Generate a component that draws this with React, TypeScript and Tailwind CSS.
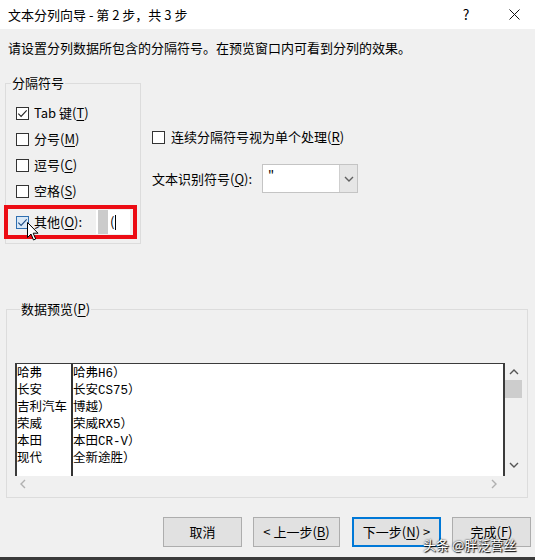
import React from "react";

function Box({ checked, hover }: { checked?: boolean; hover?: boolean }) {
  return (
    <span
      className={
        hover
          ? "w-[13px] h-[13px] border border-[#2f6fb0] bg-[#d9e8f6] flex items-center justify-center shrink-0"
          : "w-[13px] h-[13px] border border-[#333333] bg-white flex items-center justify-center shrink-0"
      }
    >
      {checked && (
        <svg width="11" height="11" viewBox="0 0 11 11">
          <path
            d="M1.3 5.6 L4.1 8.4 L9.7 2.4"
            fill="none"
            stroke={hover ? "#1e4e86" : "#222"}
            strokeWidth="1.1"
          />
        </svg>
      )}
    </span>
  );
}

function Row({ checked, label, k, rest }: { checked?: boolean; label: string; k: string; rest?: string }) {
  return (
    <div className="h-[26px] flex items-center pl-[10px] gap-[5px]">
      <Box checked={checked} />
      <span className="leading-[18px]">
        {label}(<u className="underline-offset-2">{k}</u>){rest}
      </span>
    </div>
  );
}

function Chev({ dir, color }: { dir: "up" | "down" | "left" | "right"; color: string }) {
  const d =
    dir === "up"
      ? "M1 6 L5 2 L9 6"
      : dir === "down"
      ? "M1 2 L5 6 L9 2"
      : dir === "left"
      ? "M6 1 L2 5 L6 9"
      : "M2 1 L6 5 L2 9";
  const w = dir === "up" || dir === "down" ? 10 : 8;
  const h = dir === "up" || dir === "down" ? 8 : 10;
  return (
    <svg width={w} height={h} viewBox={`0 0 ${w} ${h}`}>
      <path d={d} fill="none" stroke={color} strokeWidth="1.4" />
    </svg>
  );
}

const rows: [string, string][] = [
  ["哈弗", "哈弗H6）"],
  ["长安", "长安CS75）"],
  ["吉利汽车", "博越）"],
  ["荣威", "荣威RX5）"],
  ["本田", "本田CR-V）"],
  ["现代", "全新途胜）"],
];

export default function App() {
  return (
    <div className="relative w-[535px] h-[560px] overflow-hidden bg-[#f0f0f0] text-[13px] text-black font-['Noto_Sans_CJK_SC','Microsoft_YaHei',sans-serif] flex flex-col">
      {/* title bar */}
      <div className="h-[29px] bg-white flex items-center pl-[8px] shrink-0">
        <span className="flex-1 leading-[18px]">文本分列向导 - 第 2 步，共 3 步</span>
        <span className="w-[20px] text-center text-[14px]">?</span>
        <span className="w-[20px] ml-[28px] mr-[11px] flex items-center justify-center">
          <svg width="11" height="11" viewBox="0 0 11 11">
            <path d="M0.5 0.5 L10.5 10.5 M10.5 0.5 L0.5 10.5" stroke="#111" strokeWidth="1" />
          </svg>
        </span>
      </div>

      {/* instruction */}
      <div className="pl-[8px] pt-[10px] leading-[18px]">
        请设置分列数据所包含的分隔符号。在预览窗口内可看到分列的效果。
      </div>

      {/* middle */}
      <div className="mt-[17px] flex">
        <fieldset className="ml-[5px] w-[136px] border border-[#dcdcdc] p-0 pb-[4px]">
          <legend className="ml-[5px] px-[1px] leading-[18px]">分隔符号</legend>
          <div className="pt-[8px]">
            <Row checked label="Tab 键" k="T" />
            <Row label="分号" k="M" />
            <Row label="逗号" k="C" />
            <Row label="空格" k="S" />
            <div className="mt-[1px] -ml-[2px] w-[133px] h-[34px] border-[4px] border-[#ec0c14] flex items-center pl-[8px]">
              <Box checked hover />
              <span className="ml-[5px] leading-[18px]">
                其他(<u className="underline-offset-2">O</u>):
              </span>
              <div className="ml-auto mr-[3px] w-[34px] h-[24px] bg-white flex items-center pl-[2px]">
                <div className="w-[10px] h-[24px] bg-[#cbcbcb]" />
                <span className="ml-[2px] leading-[16px]">(</span>
                <div className="ml-[1px] w-[1px] h-[15px] bg-black" />
              </div>
            </div>
          </div>
        </fieldset>

        <div className="ml-[11px] pt-[54px]">
          <div className="h-[18px] flex items-center gap-[6px]">
            <Box />
            <span className="leading-[18px]">
              连续分隔符号视为单个处理(<u className="underline-offset-2">R</u>)
            </span>
          </div>
          <div className="mt-[18px] flex items-center">
            <span className="w-[110px] leading-[18px]">
              文本识别符号(<u className="underline-offset-2">Q</u>):
            </span>
            <div className="w-[96px] h-[29px] bg-white border border-[#c4c4c4] flex">
              <div className="flex-1 pl-[5px] pt-[1px] leading-[18px]">"</div>
              <div className="w-[18px] h-full bg-[#e6e6e6] border-l border-[#cfcfcf] flex items-center justify-center">
                <Chev dir="down" color="#606060" />
              </div>
            </div>
          </div>
        </div>
      </div>

      {/* data preview */}
      <fieldset className="mt-[56px] ml-[6px] w-[522px] border border-[#dcdcdc] p-0 pl-[8px] pb-[5px]">
        <legend className="ml-[5px] px-[1px] leading-[18px]">
          数据预览(<u className="underline-offset-2">P</u>)
        </legend>
        <div className="pt-[45px] flex">
          <div className="w-[490px] flex flex-col">
            <div className="h-[113px] bg-white border-t-[1.5px] border-l-2 border-r-2 border-[#3b3b3b] flex font-['Liberation_Mono','Noto_Sans_CJK_SC',monospace] text-[12.5px] leading-[17px] overflow-hidden">
              <div className="w-[56px] border-r-2 border-[#333333] pt-[2px]">
                {rows.map((r) => (
                  <div key={r[0]} className="h-[17px] whitespace-nowrap">
                    {r[0]}
                  </div>
                ))}
              </div>
              <div className="flex-1 pt-[2px]">
                {rows.map((r) => (
                  <div key={r[1]} className="h-[17px] whitespace-nowrap">
                    {r[1]}
                  </div>
                ))}
              </div>
            </div>
            <div className="h-[16px] flex items-center justify-between pl-[4px] pr-[7px]">
              <Chev dir="left" color="#b0b0b0" />
              <Chev dir="right" color="#b0b0b0" />
            </div>
          </div>
          <div className="w-[17px] h-[113px] flex flex-col">
            <div className="h-[17px] flex items-center justify-center">
              <Chev dir="up" color="#555" />
            </div>
            <div className="h-[18px] bg-[#cdcdcd]" />
            <div className="flex-1" />
            <div className="h-[17px] mb-[3px] flex items-center justify-center">
              <Chev dir="down" color="#555" />
            </div>
          </div>
        </div>
      </fieldset>

      {/* buttons */}
      <div className="mt-[19px] flex justify-end pr-[4px]">
        <button className="w-[79px] h-[30px] bg-[#e1e1e1] border border-[#adadad] leading-[18px]">取消</button>
        <button className="ml-[11px] w-[87px] h-[30px] bg-[#e1e1e1] border border-[#adadad] leading-[18px]">
          &lt; 上一步(<u className="underline-offset-2">B</u>)
        </button>
        <button className="ml-[12px] w-[89px] h-[30px] bg-[#e1e1e1] border-2 border-[#0078d7] leading-[18px]">
          下一步(<u className="underline-offset-2">N</u>) &gt;
        </button>
        <button className="ml-[11px] w-[79px] h-[30px] bg-[#e1e1e1] border border-[#adadad] leading-[18px]">
          完成(<u className="underline-offset-2">F</u>)
        </button>
      </div>

      <div className="flex-1" />
      <div className="h-[3px] bg-[#3a3a3a] shrink-0" />

      {/* mouse cursor */}
      <svg className="absolute left-[27px] top-[222px]" width="13" height="20" viewBox="0 0 13 20">
        <path
          d="M0.5 0.5 L0.5 15.5 L4 12 L6.5 18 L8.7 17 L6.2 11.2 L11 11.2 Z"
          fill="#fff"
          stroke="#000"
          strokeWidth="1"
        />
      </svg>

      {/* watermark */}
      <div className="absolute left-[423px] top-[536px] text-[13px] leading-[18px] text-white whitespace-nowrap [text-shadow:0_0_2px_#000,1px_1px_1px_#000]">
        头条 @胖泛营丝
      </div>
    </div>
  );
}
